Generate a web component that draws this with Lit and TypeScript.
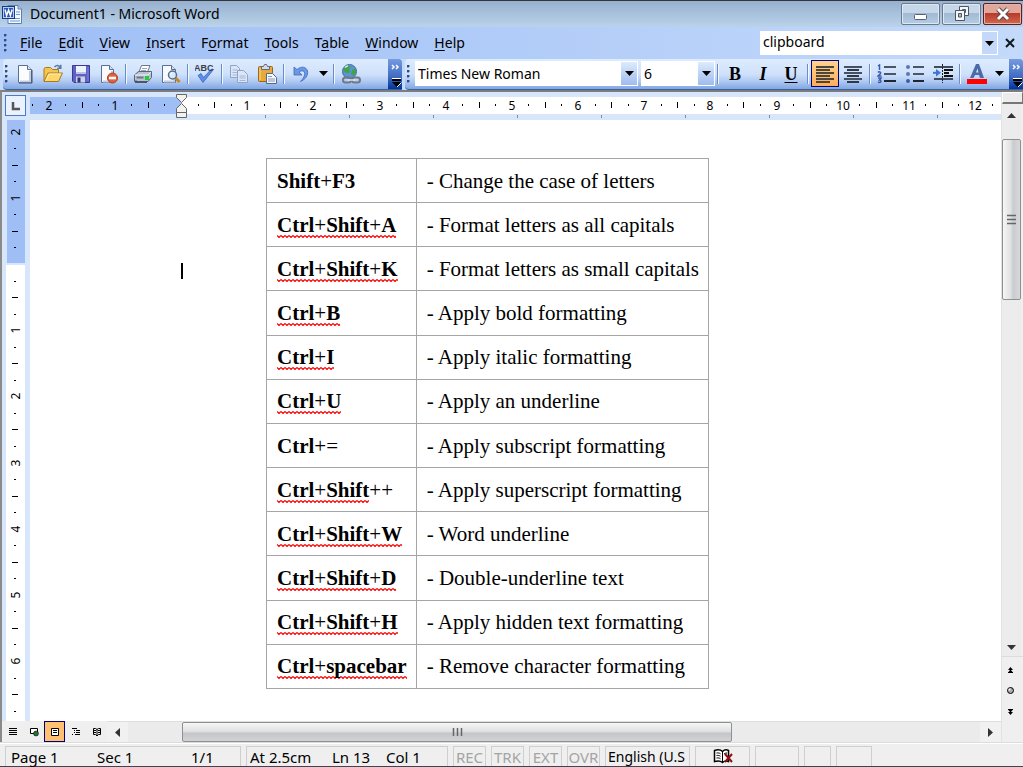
import { LitElement, html, svg, css } from "lit";
import { customElement, state } from "lit/decorators.js";
import { classMap } from "lit/directives/class-map.js";

type Row = { keys: string; rest?: string; mark?: boolean; action: string };

const ROWS: Row[] = [
  { keys: "Shift+F3", action: "Change the case of letters" },
  { keys: "Ctrl+Shift+A", mark: true, action: "Format letters as all capitals" },
  { keys: "Ctrl+Shift+K", mark: true, action: "Format letters as small capitals" },
  { keys: "Ctrl+B", mark: true, action: "Apply bold formatting" },
  { keys: "Ctrl+I", mark: true, action: "Apply italic formatting" },
  { keys: "Ctrl+U", mark: true, action: "Apply an underline" },
  { keys: "Ctrl+=", action: "Apply subscript formatting" },
  { keys: "Ctrl+Shift", rest: "++", mark: true, action: "Apply superscript formatting" },
  { keys: "Ctrl+Shift+W", mark: true, action: "Word underline" },
  { keys: "Ctrl+Shift+D", mark: true, action: "Double-underline text" },
  { keys: "Ctrl+Shift+H", mark: true, action: "Apply hidden text formatting" },
  { keys: "Ctrl+spacebar", mark: true, action: "Remove character formatting" },
];

const MENUS: [string, string, string][] = [
  ["", "F", "ile"], ["", "E", "dit"], ["", "V", "iew"], ["", "I", "nsert"], ["F", "o", "rmat"],
  ["", "T", "ools"], ["T", "a", "ble"], ["", "W", "indow"], ["", "H", "elp"],
];

/* Ruler positions: 24 quarter units span 397 pixels. */
const quarter = (q: number) => Math.round((q * 397) / 24);

/* The plus and equals signs are set lighter than the key names. */
const keyText = (s: string) =>
  s.split(/([+=]+)/).map((part) => (/^[+=]/.test(part) ? html`<span class="sign">${part}</span>` : part));

const icon = (body: unknown, w = 20, h = 20) =>
  html`<svg width=${w} height=${h} viewBox="0 0 ${w} ${h}" aria-hidden="true">${body}</svg>`;

const ICONS: Record<string, unknown> = {
  word: icon(svg`
    <path d="M6 1.500h10l3.500 3.500v14.500h-13.500z" fill="#f4f8ff" stroke="#5c7fae"/>
    <path d="M16 1.500v3.500h3.500" fill="#b8cdea" stroke="#5c7fae"/>
    <path d="M14 8h4M14 10.500h4M8 14.500h10M8 17h10" stroke="#6d9ad6"/>
    <rect x=".5" y="2.500" width="12" height="12" fill="#2a57b0" stroke="#173b86"/>
    <rect x="1.500" y="3.500" width="10" height="10" fill="none" stroke="#b9cdf0"/>
    <path d="M3 5.500l1.600 6 2-5.500 1.800 5.500 1.800-6" fill="none" stroke="#fff" stroke-width="1.500"/>`),
  fresh: icon(svg`
    <path d="M3.500 1.500h9l4 4v13h-13z" fill="#fbfcff" stroke="#5a6f94"/>
    <path d="M15 7v10.500h-10" fill="none" stroke="#c3cde0" stroke-width="2"/>
    <path d="M17 6v13h-13" fill="none" stroke="#3f5274"/>
    <path d="M12.500 1.500v4h4" fill="#dde6f4" stroke="#5a6f94"/>`),
  open: icon(svg`
    <path d="M1 17v-12.500l1.500-1h5l2 2h6v4" fill="#f3c64f" stroke="#a97a1c"/>
    <path d="M1 17.500l4-8.500h14.500l-4 8.500z" fill="#ffd66c" stroke="#a97a1c"/>
    <path d="M3 16.500l3-6.500h12" fill="none" stroke="#fff0b8"/>
    <path d="M11.500 3c2-2.300 4.500-2 6 .8M17.800.8v3.500h-3.500" fill="none" stroke="#5879a8" stroke-width="1.500"/>`),
  save: icon(svg`
    <path d="M1.500 1.500h17v17h-15.500l-1.500-1.500z" fill="#5f61c8" stroke="#3a3a92"/>
    <path d="M17 3v14" stroke="#8385dc"/>
    <rect x="5" y="2" width="10" height="8" fill="#eef2fb"/>
    <path d="M5 9h10" stroke="#b9c4de" stroke-width="2"/>
    <rect x="5" y="12.500" width="9" height="6" fill="#cdd3e6"/>
    <rect x="6.500" y="13.500" width="3" height="5" fill="#343779"/>`),
  permission: icon(svg`
    <path d="M2.500 1.500h8l4 4v13h-12z" fill="#f8faff" stroke="#5a6f94"/>
    <path d="M13 7v10.500h-9" fill="none" stroke="#c3cde0" stroke-width="2"/>
    <path d="M10.500 1.500v4h4" fill="#d4deee" stroke="#5a6f94"/>
    <circle cx="13.500" cy="14" r="5" fill="#e0603a" stroke="#b23a1e"/>
    <rect x="10" y="12.700" width="7" height="2.600" fill="#fff"/>`),
  print: icon(svg`
    <path d="M6 8l2.500-6.500h8.500l-2.500 6.500z" fill="#fff" stroke="#6b7890"/>
    <path d="M9 4.500h5M8 6.500h5" stroke="#98a6bd"/>
    <path d="M1.500 11l4-3.500h13v6l-3.500 4h-13.500z" fill="#bac2cf" stroke="#59657b"/>
    <path d="M2 11h13l3-3" fill="none" stroke="#f0f3f8"/>
    <path d="M3 16.500v1.500h11" fill="none" stroke="#4a566e" stroke-width="2"/>
    <rect x="3.500" y="12.500" width="7" height="2" fill="#6c7789"/>
    <rect x="12" y="12" width="4" height="4" fill="#1fce32"/>`),
  preview: icon(svg`
    <path d="M1.500 1.500h9l4 4v13h-13z" fill="#f8faff" stroke="#5a6f94"/>
    <path d="M13 7v10.500h-10" fill="none" stroke="#c3cde0" stroke-width="2"/>
    <path d="M10.500 1.500v4h4" fill="#d4deee" stroke="#5a6f94"/>
    <path d="M14.500 14l4 4" stroke="#c98520" stroke-width="3"/>
    <circle cx="11.500" cy="11" r="4" fill="#d5ebfb" stroke="#586d8a" stroke-width="1.500"/>
    <path d="M9.500 11a2 2 0 0 1 2-2" fill="none" stroke="#fff"/>`),
  spelling: icon(svg`
    <path d="M3 11.500l5 7L18.500 5.500l-2-.5-8 8.500-2.500-4z" fill="#5c8fe8" stroke="#3864bb" stroke-width=".8"/>
    <text x="-1" y="7" class="abc">ABC</text>`),
  copy: icon(svg`
    <path d="M1.500 1.500h6l3 3v9h-9z" fill="#dbe5f6" stroke="#8ea4ca"/>
    <path d="M3.500 6h5M3.500 8.500h5M3.500 11h5" stroke="#a4b6d6"/>
    <path d="M8.500 6.500h6l4 4v8h-10z" fill="#dbe5f6" stroke="#8ea4ca"/>
    <path d="M10.500 12h6M10.500 14h6M10.500 16.500h6" stroke="#a4b6d6"/>`),
  paste: icon(svg`
    <rect x="1.500" y="2.500" width="14" height="15" rx="1" fill="#e7a93a" stroke="#98681b"/>
    <path d="M3 4v12" stroke="#ffd782"/>
    <path d="M4.500 5.500v-3h2l1-2h2l1 2h2v3z" fill="#d6dbe5" stroke="#626b7d"/>
    <path d="M9.500 9.500h6l4 4v6h-10z" fill="#f4f7fc" stroke="#56688a"/>
    <path d="M11 12.500h4M11 15h7M11 17h7" stroke="#8598b8"/>`),
  undo: icon(svg`
    <path d="M3 3v8h8l-3-3c3.500-2.500 6.500-.5 5.500 3-.5 2.500-2 4.500-4 6.500 5-2 8-6.500 7-10.500-1-4-6-5.500-10.500-1.500z" fill="#6a97e6" stroke="#4069bd" stroke-width=".8"/>`),
  link: icon(svg`
    <circle cx="8.500" cy="7.500" r="7" fill="#5c93d6" stroke="#486b97"/>
    <path d="M4 2.500c3-2 4.500-1 6 .5l-2 2 1 3-3 1.500-4-3zM11 6l4-1.500v4l-3 3.500-2-2z" fill="#3fa548"/>
    <path d="M4 3.500c1-1 2-1.500 3-1.500" stroke="#d5ecff" fill="none" stroke-width="1.500"/>
    <rect x="2" y="13.500" width="8" height="5" rx="2.500" fill="none" stroke="#6e7888" stroke-width="2"/>
    <rect x="11" y="13.500" width="8" height="5" rx="2.500" fill="none" stroke="#6e7888" stroke-width="2"/>
    <path d="M6.500 16h8" stroke="#dde2ea" stroke-width="1.500"/>`),
  left: icon(svg`<path d="M1 3h18M1 9h18M1 15h18" stroke="#4a463c" stroke-width="2"/><path d="M1 6h14M1 12h14M1 18h14" stroke="#4a463c" stroke-width="2"/>`),
  center: icon(svg`<path d="M1 3h18M1 9h18M1 15h18" stroke="#465064" stroke-width="2"/><path d="M4 6h12M4 12h12M4 18h12" stroke="#2f3849" stroke-width="2"/>`),
  numbers: icon(svg`
    <path d="M7 3h12M7 10h12" stroke="#4a5566" stroke-width="2"/><path d="M7 17h12" stroke="#1e2632" stroke-width="2"/>
    <path d="M1 2l1.500-1v5M1 8.500c1-1.500 3-.5 2.500 1L1 12h3.500M1 14h3l-1.500 2c2 0 2 2.500 0 2.500L1 18" fill="none" stroke="#3c5cae" stroke-width="1.500"/>`),
  bullets: icon(svg`
    <path d="M8 3h11M8 10h11" stroke="#4a5566" stroke-width="2"/><path d="M8 17h11" stroke="#1e2632" stroke-width="2"/>
    <circle cx="3" cy="3" r="2" fill="#5a76b8"/><circle cx="3" cy="10" r="2" fill="#5a76b8"/><circle cx="3" cy="17" r="2" fill="#3e5da8"/>`),
  indent: icon(svg`
    <path d="M1 3h19" stroke="#3f4a5c" stroke-width="2"/><path d="M11 6h9M11 9h5M11 12h9" stroke="#111" stroke-width="2"/>
    <path d="M1 15h19" stroke="#3f4a5c" stroke-width="2"/><path d="M9.500 0v19" stroke="#222" stroke-dasharray="2 1"/>
    <path d="M3 5v7.500l5-3.700z" fill="#3d74d8"/><path d="M0 8.800h4" stroke="#3d74d8" stroke-width="2"/>`),
};

const downArrow = svg`<path d="M0 0h9l-4.500 5z" fill="#000"/>`;

@customElement("app-root")
export class AppRoot extends LitElement {
  @state() private viewWidth = window.innerWidth;
  @state() private viewHeight = window.innerHeight;

  private onResize = () => {
    this.viewWidth = window.innerWidth;
    this.viewHeight = window.innerHeight;
  };

  connectedCallback() {
    super.connectedCallback();
    window.addEventListener("resize", this.onResize);
  }

  disconnectedCallback() {
    window.removeEventListener("resize", this.onResize);
    super.disconnectedCallback();
  }

  static styles = css`
    :host { display: flex; flex-direction: column; height: 100vh; overflow: hidden; background: #efefef;
      color: #000; font: 14px/20px "Noto Sans", "Open Sans", sans-serif; }
    * { box-sizing: border-box; }
    button, input, select { font: inherit; color: inherit; margin: 0; padding: 0; border: 0; border-radius: 0; background: none; }
    svg { display: block; flex: none; }
    button { display: flex; align-items: center; justify-content: center; }

    .title { flex: none; display: flex; align-items: center; height: 27px; padding: 0 0 1px 2px; gap: 8px;
      border-top: 1px solid #33363c; background: linear-gradient(#96b0cf, #bbd3ea); }
    .title h1 { flex: 1; margin: 0; font-size: 14px; font-weight: 400; line-height: 20px; }
    .window-buttons { display: flex; gap: 2px; padding-right: 1px; }
    .window-buttons button { width: 39px; height: 22px; border: 1px solid #6a7a8e; border-radius: 2px;
      background: linear-gradient(#c6d7e9 45%, #a2b9d3 46%, #b4cce4); box-shadow: inset 0 0 0 1px #dce8f4; }
    .window-buttons .close { border-color: #5b1f22; background: linear-gradient(#e0a79b 45%, #b9382a 46%, #cf6a50);
      box-shadow: inset 0 0 0 1px #e6b2a8; }

    .menubar { flex: none; display: flex; align-items: center; height: 32px; padding-right: 1px;
      background: linear-gradient(90deg, #9ebef5, #c4dafb); }
    .grip { flex: none; width: 4px; height: 18px; margin: 0 4px;
      background: radial-gradient(circle at 1px 1px, #2f4a82 1px, transparent 2px) 0 0 / 4px 5px; }
    .menubar nav { display: flex; flex: 1; }
    .menubar nav button { padding: 0 8px; }
    u { text-underline-offset: 2px; text-decoration-skip-ink: none; }
    .ask { display: flex; width: 238px; height: 24px; background: #fff; padding: 1px 1px 1px 3px; }
    .ask input { flex: 1; min-width: 0; outline: 0; height: 20px; }
    .ask button { width: 15px; background: #c4d9fa; }
    .menubar .dismiss { width: 24px; height: 24px; }

    .toolbars { flex: none; display: flex; height: 31px; padding-left: 3px; background: #c4dafb; }
    .bar { display: flex; align-items: center; height: 31px; padding-bottom: 1px; border-bottom: 1px solid #3b619c; border-radius: 4px 0 0 4px;
      background: linear-gradient(#ddecfe, #cfe1fb 50%, #b6cef4 70%, #81a7e3); }
    .bar.format { flex: 1; margin-left: 3px; }
    .bar .grip { margin: 0 2px; }
    .tool { flex: none; width: 28px; height: 27px; }
    .tool.narrow { width: 16px; }
    .tool.active { border: 1px solid #000080; background: linear-gradient(#ffd28e, #ffac5a); }
    .letter { font: 700 18px/20px "Liberation Serif", serif; }
    .italic { font-style: italic; }
    .sep { flex: none; width: 2px; height: 20px; margin: 0 2px; border-left: 1px solid #6a8ccb; background: #f1f9ff; }
    .more { flex: none; display: flex; width: 14px; height: 30px; margin: 0 0 -1px auto;
      border-radius: 0 3px 0 0; background: linear-gradient(#759be0, #3f6cc0 60%, #00359d); }
    .bar.standard { width: 399px; }
    .abc { font: 700 9px "Liberation Sans", sans-serif; fill: #38404e; }
    .combo { flex: none; display: grid; grid-template-columns: 1fr 17px; height: 25px; background: #fff; }
    .combo select { grid-area: 1 / 1 / 2 / 3; appearance: none; padding-left: 3px; outline: 0; }
    .combo .drop { grid-area: 1 / 2; z-index: 1; pointer-events: none; display: flex; align-items: center; justify-content: center;
      margin: 1px 1px 1px 0; background: linear-gradient(#ddebfd, #9ebcee); }
    .font { width: 223px; margin-left: 2px; }
    .size { width: 74px; margin-left: 3px; }

    .workspace { flex: 1; min-height: 0; display: grid; grid-template-columns: 1fr 22px; border-top: 2px solid #7d7d7d;
      border-left: 2px solid #8a8a8a; }
    .editor { display: grid; grid-template: 28px 1fr 21px / 28px 1fr; min-width: 0; min-height: 0; }
    .corner { background: #d8e6fb; padding: 3px 0 0 3px; }
    .corner button { width: 21px; height: 21px; border: 1px solid #4d79c7; background: #eaf2fe; }
    .ruler { background: #d8e6fb; overflow: hidden; min-width: 0; min-height: 0; }
    .ruler text { font: 12px "Noto Sans", sans-serif; text-anchor: middle; }
    .page { display: flex; align-items: flex-start; min-height: 0; overflow: hidden; background: #fff; padding: 38px 0 0 151px; }
    .caret { flex: none; width: 2px; height: 16px; margin: 105px 83px 0 0; background: #000; }
    table { border-collapse: collapse; width: 443px; height: 531px;
      font: 21px/24px "Liberation Serif", "Times New Roman", serif; }
    td, th { border: 1px solid #a5a5a5; padding: 0 9px 0 10px; text-align: left; white-space: nowrap; }
    th { width: 150px; font-weight: 700; }
    .sign { font-weight: 400; }
    .squiggle { padding-bottom: 1px; background: url("data:image/svg+xml,%3Csvg xmlns='http://www.w3.org/2000/svg' width='4' height='3'%3E%3Cpath d='M0 .5L2 2.500L4 .5' fill='none' stroke='red' stroke-width='1.200'/%3E%3C/svg%3E") 0 100% repeat-x; }

    .foot { grid-column: 1 / 3; display: flex; background: #efefef; min-width: 0; }
    .views { display: flex; }
    .views button { width: 21px; height: 21px; }
    .views button.active { border: 1px solid #000080; background: #ffc06f; }
    .hscroll { flex: 1; display: flex; background: #ebebeb; border-top: 1px solid #dedede; height: 21px; }
    .hscroll .arrow { width: 21px; background: #f1f1f1; }
    .track { display: flex; flex: 1; min-height: 0; min-width: 0; }
    .thumb { border: 1px solid #8f8f8f; border-radius: 2px; display: flex; align-items: center; justify-content: center; flex-basis: 0;
      background: linear-gradient(#f6f6f6, #dedfe0 50%, #c4c5c8 55%, #d2d3d5); }
    .side { display: flex; flex-direction: column; background: #efefef; border-left: 1px solid #e2e2e2; min-height: 0; }
    .split { flex: none; height: 12px; background: #ececec; border: 1px solid #fff; border-right-color: #777; border-bottom: 2px solid #777; }
    .vscroll { flex: 1; min-height: 0; display: flex; flex-direction: column; margin-right: 2px; background: #ececec; }
    .vscroll .arrow { height: 23px; }
    .vscroll .arrow.down { height: 18px; }
    .vscroll .track { flex-direction: column; }
    .vscroll .thumb { background: linear-gradient(90deg, #f6f6f6, #e0e1e2 45%, #c9cbce 60%, #d8d9db); }
    .browse { flex: none; height: 86px; display: flex; flex-direction: column; border-top: 1px solid #dcdcdc; padding-top: 2px; }
    .browse button { height: 21px; width: 16px; }

    .status { flex: none; display: flex; gap: 5px; height: 25px; padding: 3px 0 0 5px; border-top: 1px solid #dcdcdc; border-bottom: 1px solid #3c4652;
      background: #efefef; font-size: 15px; line-height: 18px; box-shadow: inset 0 1px #fff; }
    .panel { flex: none; display: flex; align-items: center; height: 20px; border: 1px solid #cfcfcf; border-bottom: 0; padding-left: 4px;
      white-space: nowrap; }
    .panel.middle { justify-content: center; padding: 0; }
    .place { width: 236px; display: grid; grid-template-columns: 86px 94px 1fr; padding-left: 5px; }
    .position { width: 202px; display: grid; grid-template-columns: 82px 54px 1fr; padding-left: 3px; }
    .mode { width: 33px; color: #a4a4a4; }
    .language { width: 85px; font-size: 14px; padding-left: 2px; }
    .proof { width: 55px; }
    .wide { width: 44px; }
    .small { width: 27px; }
    .last { width: 36px; }
  `;

  private tool(name: string, label: string, active = false) {
    return html`<button class=${classMap({ tool: true, active })} aria-label=${label}>${ICONS[name]}</button>`;
  }

  private drop(label: string) {
    return html`<button class="tool narrow" aria-label=${label}>${icon(downArrow, 9, 5)}</button>`;
  }

  private more(label: string) {
    return html`<button class="more" aria-label=${label}>
      ${icon(svg`<path d="M4 6l2 2-2 2M8 6l2 2-2 2" fill="none" stroke="#fff" stroke-width="1.500"/>
        <path d="M4 19.500h9" stroke="#fff"/><path d="M4 21h9" stroke="#000" stroke-width="2"/>
        <path d="M4 23h9l-4.500 5z" fill="#000"/><path d="M9 28l4.500-4.500" stroke="#fff"/>`, 14, 30)}
    </button>`;
  }

  private horizontalRuler() {
    const origin = 151;
    const width = Math.max(200, this.viewWidth - 52);
    const marks = [];
    for (let q = -9; origin + quarter(q) < width - 8; q++) {
      if (q === 0) continue;
      const x = origin + quarter(q);
      if (q % 4 === 0) marks.push(svg`<text x=${x} y="18">${Math.abs(q / 4)}</text>`);
      else if (q % 2 === 0) marks.push(svg`<rect x=${x} y="10" width="1" height="6"/>`);
      else marks.push(svg`<rect x=${x} y="12" width="1" height="2"/>`);
    }
    const tabs = [];
    for (let x = origin + 84; x < width; x += 84) tabs.push(svg`<rect x=${x} y="23" width="1" height="3" fill="#7f8ca0"/>`);
    return html`<svg width=${width} height="28">
      <rect y="5" width="151" height="17" fill="#9ebef5"/>
      <rect x="151" y="5" width=${width - 151} height="17" fill="#fff"/>
      ${marks}${tabs}
      <path d="M146.500 2.500h10v3l-5 5-5-5zM151.500 11.500l5 5v4h-10v-4zM146.500 20.500h10v5h-10z" fill="#f2f2ee" stroke="#62656b"/>
    </svg>`;
  }

  private verticalRuler() {
    const origin = 144;
    const height = Math.max(200, this.viewHeight - 166);
    const marks = [];
    for (let q = -8; origin + quarter(q) < height - 6; q++) {
      if (q === 0) continue;
      const y = origin + quarter(q);
      if (q % 4 === 0) marks.push(svg`<text transform="translate(18 ${y}) rotate(-90)">${Math.abs(q / 4)}</text>`);
      else if (q % 2 === 0) marks.push(svg`<rect x="10" y=${y} width="6" height="1"/>`);
      else marks.push(svg`<rect x="12" y=${y} width="2" height="1"/>`);
    }
    return html`<svg width="28" height=${height}>
      <rect x="5" width="18" height="143" fill="#9ebef5"/>
      <rect x="4" y="145" width="19" height=${height - 145} fill="#fff"/>
      ${marks}
    </svg>`;
  }

  render() {
    return html`
      <header class="title">
        ${ICONS.word}
        <h1>Document1 - Microsoft Word</h1>
        <div class="window-buttons">
          <button aria-label="Minimize">${icon(svg`<rect x="3.500" y="10.500" width="12" height="5" rx="1" fill="#fff" stroke="#56606e"/>`)}</button>
          <button aria-label="Restore">${icon(svg`<path d="M7.500 2.500h9v9h-9z" fill="#f4f6f8" stroke="#4c5663"/><path d="M10.500 5.500h3v3h-3z" fill="#a8bdd4" stroke="#4c5663"/>
            <path d="M3.500 6.500h9v10h-9z" fill="#f4f6f8" stroke="#4c5663"/><path d="M6.500 9.500h3v3.500h-3z" fill="#a8bdd4" stroke="#4c5663"/>`)}</button>
          <button class="close" aria-label="Close">${icon(svg`<path d="M5 5l10 10M15 5l-10 10" stroke="#5a4a4c" stroke-width="5"/><path d="M5 5l10 10M15 5l-10 10" stroke="#fff" stroke-width="3"/>`)}</button>
        </div>
      </header>

      <div class="menubar">
        <span class="grip"></span>
        <nav aria-label="Menu">${MENUS.map(([a, k, b]) => html`<button><span>${a}<u>${k}</u>${b}</span></button>`)}</nav>
        <div class="ask">
          <input aria-label="Type a question for help" .value=${"clipboard"}>
          <button aria-label="Recent questions">${icon(downArrow, 9, 5)}</button>
        </div>
        <button class="dismiss" aria-label="Close document">${icon(svg`<path d="M1 1l8 8M9 1l-8 8" stroke="#101820" stroke-width="2"/>`, 10, 10)}</button>
      </div>

      <div class="toolbars">
        <div class="bar standard" role="toolbar" aria-label="Standard">
          <span class="grip"></span>
          ${this.tool("fresh", "New")}${this.tool("open", "Open")}${this.tool("save", "Save")}${this.tool("permission", "Permission")}
          <span class="sep"></span>
          ${this.tool("print", "Print")}${this.tool("preview", "Print Preview")}
          <span class="sep"></span>
          ${this.tool("spelling", "Spelling")}
          <span class="sep"></span>
          ${this.tool("copy", "Copy")}${this.tool("paste", "Paste")}
          <span class="sep"></span>
          ${this.tool("undo", "Undo")}${this.drop("Undo list")}
          <span class="sep"></span>
          ${this.tool("link", "Insert Hyperlink")}
          ${this.more("Standard options")}
        </div>
        <div class="bar format" role="toolbar" aria-label="Formatting">
          <span class="grip"></span>
          <div class="combo font"><select aria-label="Font"><option>Times New Roman</option></select><span class="drop">${icon(downArrow, 9, 5)}</span></div>
          <div class="combo size"><select aria-label="Font Size"><option>6</option></select><span class="drop">${icon(downArrow, 9, 5)}</span></div>
          <span class="sep"></span>
          <button class="tool letter">B</button>
          <button class="tool letter italic">I</button>
          <button class="tool letter"><u>U</u></button>
          <span class="sep"></span>
          ${this.tool("left", "Align Left", true)}${this.tool("center", "Center")}
          <span class="sep"></span>
          ${this.tool("numbers", "Numbering")}${this.tool("bullets", "Bullets")}${this.tool("indent", "Increase Indent")}
          <span class="sep"></span>
          <button class="tool" aria-label="Font Color">${icon(svg`<path d="M3 14L9 0h3l5 14h-4l-1-3h-4l-1.500 3zM9 8.500h2.500l-1-4z" fill="#4a6ba8"/><rect y="15" width="20" height="5" fill="#f00"/>`)}</button>
          ${this.drop("Font Color list")}
          ${this.more("Formatting options")}
        </div>
      </div>

      <main class="workspace">
        <div class="editor">
          <div class="corner"><button aria-label="Tab stop">${icon(svg`<path d="M2 1v7h7" fill="none" stroke="#555" stroke-width="2.500"/>`, 10, 10)}</button></div>
          <div class="ruler">${this.horizontalRuler()}</div>
          <div class="ruler">${this.verticalRuler()}</div>
          <section class="page">
            <span class="caret"></span>
            <table>
              <tbody>
                ${ROWS.map((r) => html`<tr>
                  <th scope="row"><span class=${classMap({ squiggle: !!r.mark })}>${keyText(r.keys)}</span>${keyText(r.rest ?? "")}</th>
                  <td>- ${r.action}</td>
                </tr>`)}
              </tbody>
            </table>
          </section>
          <div class="foot">
            <div class="views">
              <button aria-label="Normal View">${icon(svg`<path d="M1 1.500h8M1 3.500h8M1 5.500h8M1 7.500h8" stroke="#000"/>`, 10, 10)}</button>
              <button aria-label="Web Layout View">${icon(svg`<path d="M1.500 1.500h7v5h-7z" fill="#fff" stroke="#000"/><circle cx="7" cy="6.500" r="2.500" fill="#26703c" stroke="#000" stroke-width=".5"/>`, 10, 10)}</button>
              <button class="active" aria-label="Print Layout View">${icon(svg`<path d="M1.500 1.500h7v7h-7z" fill="#fff" stroke="#000"/><path d="M3 3.500h4M3 5.500h4" stroke="#000"/>`, 10, 10)}</button>
              <button aria-label="Outline View">${icon(svg`<path d="M1 1.500h5M3 3.500h1M5 3.500h4M3 5.500h1M5 5.500h4M1 7.500h1M4 7.500h5" stroke="#000"/>`, 10, 10)}</button>
              <button aria-label="Reading Layout">${icon(svg`<path d="M1.500 1.500h2l1.500 1 1.500-1h2v6h-2l-1.500 1.500-1.500-1.500h-2zM5 2.500v6M2 3.500h2M2 5.500h2M6 3.500h2M6 5.500h2" fill="none" stroke="#000"/>`, 10, 10)}</button>
            </div>
            <div class="hscroll">
              <button class="arrow" aria-label="Scroll left">${icon(svg`<path d="M5 0v9l-5-4.500z" fill="#333"/>`, 5, 9)}</button>
              <div class="track">
                <span style="flex-grow:54"></span>
                <div class="thumb" style="flex-grow:549">${icon(svg`<path d="M1.500 1v8M5.500 1v8M9.500 1v8" stroke="#666" stroke-width="1.500"/>`, 11, 10)}</div>
                <span style="flex-grow:248"></span>
              </div>
              <button class="arrow" aria-label="Scroll right">${icon(svg`<path d="M0 0v9l5-4.500z" fill="#333"/>`, 5, 9)}</button>
            </div>
          </div>
        </div>
        <aside class="side">
          <div class="split"></div>
          <div class="vscroll">
            <button class="arrow" aria-label="Scroll up">${icon(svg`<path d="M0 5h9l-4.500-5z" fill="#333"/>`, 9, 5)}</button>
            <div class="track">
              <span style="flex-grow:12"></span>
              <div class="thumb" style="flex-grow:160">${icon(svg`<path d="M0 1.500h9M0 5.500h9M0 9.500h9" stroke="#666" stroke-width="1.500"/>`, 9, 11)}</div>
              <span style="flex-grow:340"></span>
            </div>
            <button class="arrow down" aria-label="Scroll down">${icon(svg`<path d="M0 0h9l-4.500 5z" fill="#333"/>`, 9, 5)}</button>
          </div>
          <div class="browse">
            <button aria-label="Previous Page">${icon(svg`<path d="M0 3l2.500-3 2.500 3zM0 5.500l2.500-3 2.500 3zM0 5h5v1h-5z"/>`, 5, 6)}</button>
            <button aria-label="Select Browse Object">${icon(svg`<circle cx="3.500" cy="3.500" r="3" fill="#aaa" stroke="#000"/><circle cx="2.500" cy="2.500" r="1" fill="#fff"/>`, 7, 7)}</button>
            <button aria-label="Next Page">${icon(svg`<path d="M0 0h5v1h-5zM0 .5h5l-2.500 3zM0 3h5l-2.500 3z"/>`, 5, 6)}</button>
          </div>
        </aside>
      </main>

      <footer class="status">
        <div class="panel place"><span>Page 1</span><span>Sec 1</span><span>1/1</span></div>
        <div class="panel position"><span>At 2.5cm</span><span>Ln 13</span><span>Col 1</span></div>
        ${["REC", "TRK", "EXT", "OVR"].map((m) => html`<div class="panel middle mode">${m}</div>`)}
        <div class="panel language">English (U.S</div>
        <div class="panel middle proof">${icon(svg`
          <path d="M1.500 1.500c3-1 6-1 8 1 2-2 4-2 6-1v11c-2-.8-4-.8-6 1-2-1.800-5-1.800-8-1z" fill="#fff" stroke="#000" stroke-width="1.500"/>
          <path d="M9.500 2.500v11M3.500 4c1.500-.3 3 0 4 .8M3.500 6.500c1.500-.3 3 0 4 .8M3.500 9c1.500-.3 3 0 4 .8M11 5c1-.8 2-1 3-1" fill="none" stroke="#000"/>
          <path d="M12 5l7 8M19 5l-7 8" stroke="#8c1010" stroke-width="2"/>`, 20, 16)}</div>
        <div class="panel wide"></div>
        <div class="panel small"></div>
        <div class="panel last"></div>
      </footer>
    `;
  }
}
